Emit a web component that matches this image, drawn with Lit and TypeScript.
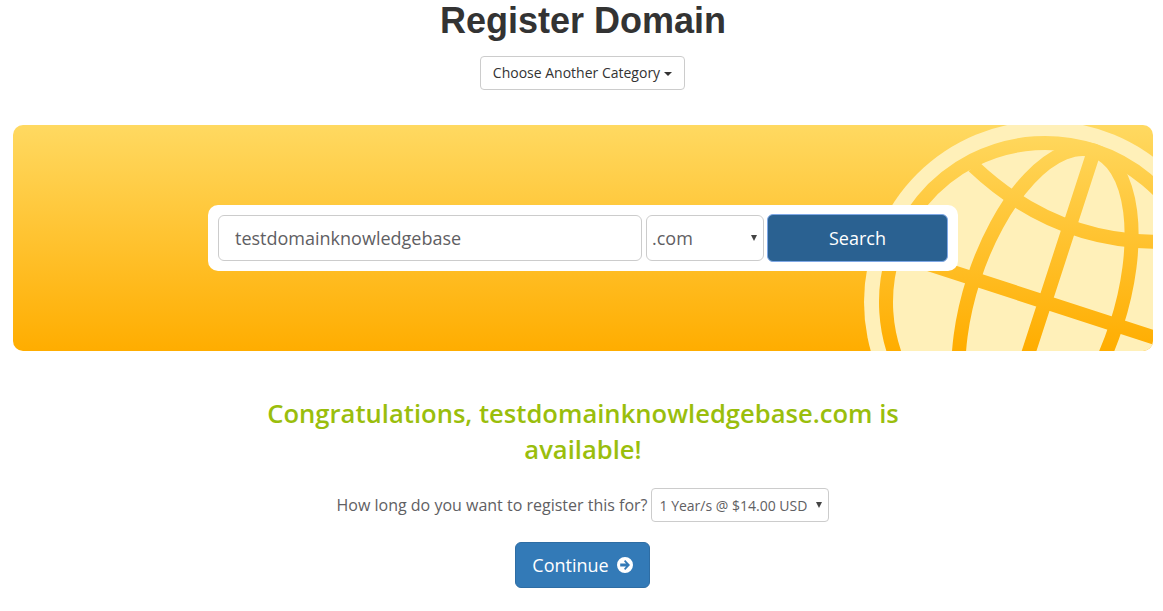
import { LitElement, html, css, svg } from "lit";
import { customElement } from "lit/decorators.js";

const globe = svg`
  <defs>
    <mask id="grid" maskUnits="userSpaceOnUse" x="0" y="0" width="300" height="226">
      <circle cx="192" cy="177" r="181" fill="#fff" />
      <g fill="none" stroke="#000" stroke-width="14" transform="rotate(18 192 177)">
        <circle cx="192" cy="177" r="159" />
        <ellipse cx="192" cy="177" rx="75" ry="159" />
        <path d="M192 18V336M33 177H351" />
        <path d="M82 70Q200 126 318 70M82 284Q200 228 318 284" />
      </g>
    </mask>
  </defs>
  <rect width="300" height="226" fill="#fff0b9" mask="url(#grid)" />
`;

@customElement("app-root")
export class AppRoot extends LitElement {
  static styles = css`
    :host {
      display: block;
      padding: 0 10px 20px 13px;
      font-family: "Open Sans", sans-serif;
      color: #5f6063;
    }

    h1 {
      margin: 0;
      font: bold 36px/42px "Liberation Sans", Arial, sans-serif;
      color: #333;
      text-align: center;
    }

    .category {
      display: flex;
      justify-content: center;
      margin-top: 14px;
      padding-right: 1px;
    }

    .category-btn {
      display: flex;
      align-items: center;
      gap: 4px;
      height: 34px;
      box-sizing: border-box;
      padding: 0 12px 2px;
      background: #fff;
      border: 1px solid #ccc;
      border-radius: 4px;
      font: 14px "Open Sans", sans-serif;
      color: #333;
    }

    .caret {
      width: 0;
      height: 0;
      margin-top: 3px;
      border-top: 4px solid #333;
      border-left: 4px solid transparent;
      border-right: 4px solid transparent;
    }

    .banner {
      position: relative;
      overflow: hidden;
      display: flex;
      align-items: center;
      justify-content: center;
      height: 226px;
      margin-top: 35px;
      border-radius: 10px;
      background: linear-gradient(#ffd961, #ffad00);
    }

    .globe {
      position: absolute;
      top: 0;
      right: 0;
      width: 300px;
      height: 226px;
    }

    .search {
      position: relative;
      display: flex;
      width: 750px;
      height: 66px;
      box-sizing: border-box;
      padding: 10px;
      background: #fff;
      border-radius: 10px;
    }

    .search input {
      width: 424px;
      height: 46px;
      box-sizing: border-box;
      padding: 0 16px;
      border: 1px solid #ccc;
      border-radius: 6px;
      font: 18px "Open Sans", sans-serif;
      color: #5f6063;
      outline: none;
    }

    .select {
      position: relative;
      display: block;
    }

    .select::after {
      content: "";
      position: absolute;
      top: 50%;
      right: 7px;
      margin-top: -3px;
      border-top: 6px solid #444;
      border-left: 3px solid transparent;
      border-right: 3px solid transparent;
    }

    .select select {
      display: block;
      appearance: none;
      box-sizing: border-box;
      background: #fff;
      border: 1px solid #ccc;
      outline: none;
    }

    .tld {
      margin-left: 4px;
    }

    .tld select {
      width: 118px;
      height: 46px;
      padding: 0 5px;
      border-radius: 6px;
      font: 18px "Open Sans", sans-serif;
      color: #5f6063;
    }

    .search-btn {
      width: 181px;
      height: 48px;
      margin: -1px 0 -1px 3px;
      background: #2a6191;
      border: 1px solid #7fa8e6;
      border-radius: 6px;
      font: 18px "Open Sans", sans-serif;
      color: #fff;
    }

    .result {
      max-width: 700px;
      margin: 45px auto 0;
      font: 600 25.6px/36px "Open Sans", sans-serif;
      color: #9abe0c;
      text-align: center;
    }

    .period {
      display: flex;
      align-items: center;
      justify-content: center;
      gap: 4px;
      margin-top: 20px;
      font-size: 16px;
    }

    .period select {
      width: 178px;
      height: 34px;
      padding: 0 7px;
      border-radius: 4px;
      font: 14px "Open Sans", sans-serif;
      color: #5f6063;
    }

    .actions {
      display: flex;
      justify-content: center;
      margin-top: 20px;
      padding-right: 1px;
    }

    .continue {
      display: flex;
      align-items: center;
      justify-content: center;
      gap: 8px;
      width: 135px;
      height: 46px;
      box-sizing: border-box;
      padding: 0;
      background: #337ab7;
      border: 1px solid #2e6da4;
      border-radius: 6px;
      font: 18px "Open Sans", sans-serif;
      color: #fff;
    }

    .continue svg {
      width: 16px;
      height: 16px;
    }
  `;

  render() {
    return html`
      <h1>Register Domain</h1>
      <div class="category">
        <button class="category-btn">Choose Another Category <span class="caret"></span></button>
      </div>

      <div class="banner">
        <svg class="globe" viewBox="0 0 300 226">${globe}</svg>
        <div class="search">
          <input type="text" .value=${"testdomainknowledgebase"} />
          <label class="select tld">
            <select><option>.com</option></select>
          </label>
          <button class="search-btn">Search</button>
        </div>
      </div>

      <div class="result">Congratulations, testdomainknowledgebase.com is available!</div>

      <div class="period">
        <span>How long do you want to register this for?</span>
        <label class="select">
          <select><option>1 Year/s @ $14.00 USD</option></select>
        </label>
      </div>

      <div class="actions">
        <button class="continue">
          Continue
          <svg viewBox="0 0 16 16">
            <path
              fill="#fff"
              fill-rule="evenodd"
              d="M8 0a8 8 0 1 1 0 16A8 8 0 0 1 8 0ZM8.2 3 7 4.2 9 6.4H3.2v3.2H9l-2 2.2L8.200 13 13 8Z"
            />
          </svg>
        </button>
      </div>
    `;
  }
}

declare global {
  interface HTMLElementTagNameMap {
    "app-root": AppRoot;
  }
}
